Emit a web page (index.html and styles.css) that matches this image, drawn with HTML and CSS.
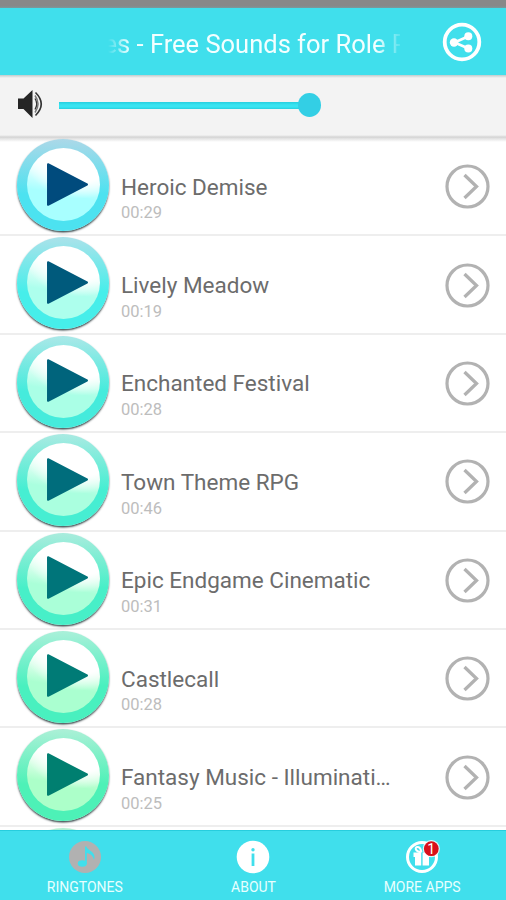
FILE: index.html
```
<!DOCTYPE html>
<html lang="en">
<head>
<meta charset="utf-8">
<title>Ringtones</title>
<link rel="stylesheet" href="styles.css">
</head>
<body>
<svg class="defs" aria-hidden="true">
  <symbol id="play" viewBox="0 0 40 42"><path d="M1 1.2 39 21 1 40.8Z" fill="currentColor" stroke="currentColor" stroke-width="2" stroke-linejoin="round"/></symbol>
  <symbol id="next" viewBox="0 0 46 46"><g fill="none" stroke="#b2b2b2"><circle cx="22.500" cy="22.500" r="20.500" stroke-width="3.200"/><path d="M19.500 11 31.500 22.500 19.500 34" stroke-width="3.300"/></g></symbol>
</svg>
<div class="app">
  <div class="status"></div>
  <header class="bar">
    <h1 class="marquee"><span>es - Free Sounds for Role P</span></h1>
    <svg class="share" viewBox="0 0 40 40"><circle cx="20" cy="20" r="17.300" fill="none" stroke="#fff" stroke-width="3.800"/><path d="M26.500 14.300 12.500 20.500 26.500 26.500" fill="none" stroke="#fff" stroke-width="2.600"/><g fill="#fff"><circle cx="26.300" cy="14.300" r="4"/><circle cx="12" cy="20.500" r="4.200"/><circle cx="26.300" cy="26.500" r="4"/></g></svg>
  </header>
  <div class="volume">
    <svg class="speaker" viewBox="0 0 28 30"><path d="M1 9.500H6.500L15.500 1V29L6.500 20H1Z" fill="#252525"/><g fill="none" stroke="#333"><path d="M18 9.500Q21.500 15 18 20.500" stroke-width="1.300"/><path d="M18 6.500Q24 15 18 23.500" stroke="#777" stroke-width="1.500"/><path d="M18.500 3.500Q30 15 18.500 26.500" stroke-width="1.600"/></g></svg>
    <div class="track"><i class="thumb"></i></div>
  </div>
  <main class="list">
    <div class="row c1"><div class="disc"><svg><use href="#play"/></svg></div><div class="info"><b>Heroic Demise</b><small>00:29</small></div><svg class="next"><use href="#next"/></svg></div>
    <div class="row c2"><div class="disc"><svg><use href="#play"/></svg></div><div class="info"><b>Lively Meadow</b><small>00:19</small></div><svg class="next"><use href="#next"/></svg></div>
    <div class="row c3"><div class="disc"><svg><use href="#play"/></svg></div><div class="info"><b>Enchanted Festival</b><small>00:28</small></div><svg class="next"><use href="#next"/></svg></div>
    <div class="row c4"><div class="disc"><svg><use href="#play"/></svg></div><div class="info"><b>Town Theme RPG</b><small>00:46</small></div><svg class="next"><use href="#next"/></svg></div>
    <div class="row c5"><div class="disc"><svg><use href="#play"/></svg></div><div class="info"><b>Epic Endgame Cinematic</b><small>00:31</small></div><svg class="next"><use href="#next"/></svg></div>
    <div class="row c6"><div class="disc"><svg><use href="#play"/></svg></div><div class="info"><b>Castlecall</b><small>00:28</small></div><svg class="next"><use href="#next"/></svg></div>
    <div class="row c7"><div class="disc"><svg><use href="#play"/></svg></div><div class="info"><b>Fantasy Music - Illuminati…</b><small>00:25</small></div><svg class="next"><use href="#next"/></svg></div>
    <div class="row c8"><div class="disc"></div></div>
  </main>
  <nav class="tabs">
    <div class="tab"><svg viewBox="0 0 34 34"><circle cx="17" cy="17" r="16" fill="#b1b1b1"/><ellipse cx="14.300" cy="23.500" rx="4.500" ry="3.300" fill="#40dfec"/><path d="M17 24V6.500H18.500C19 10.500 29 11.500 26 20 25 15.500 22 13.500 18.800 13V24Z" fill="#40dfec"/></svg><span>RINGTONES</span></div>
    <div class="tab"><svg viewBox="0 0 34 34"><circle cx="17" cy="17" r="16.300" fill="#fff"/><g fill="#40dfec"><circle cx="17" cy="9.700" r="1.700"/><path d="M15.600 13.500h2.800V26h-2.800z"/></g></svg><span>ABOUT</span></div>
    <div class="tab"><svg viewBox="0 0 34 34"><circle cx="17" cy="17" r="14.500" fill="none" stroke="#fff" stroke-width="3"/><path d="M8.500 12.500H16.200V25.500H10V17H8.500ZM17.600 12.500H25V17H24V25.500H17.600Z" fill="#fff"/><path d="M16.500 12C10 12 9.500 7 12.500 7S16 10 16.500 12" fill="none" stroke="#fff" stroke-width="2"/><circle cx="26.300" cy="8.700" r="8.600" fill="#fff" fill-opacity=".8"/><circle cx="26.300" cy="8.700" r="7.400" fill="#d9101b"/><text x="26.300" y="13.500" text-anchor="middle" class="count">1</text></svg><span>MORE APPS</span></div>
  </nav>
</div>
</body>
</html>
```
FILE: styles.css
```
* { box-sizing: border-box; }
body { margin: 0; font-family: Roboto, "Liberation Sans", sans-serif; }
.defs { position: absolute; width: 0; height: 0; }
.app { width: 506px; height: 900px; display: flex; flex-direction: column; overflow: hidden; background: #fff; }
.status { flex: none; height: 8px; background: linear-gradient(#888 6px, #7a9a9d); }
.bar { flex: none; height: 67px; padding: 0 24px 0 108px; background: #40dfec; display: flex; align-items: center; justify-content: space-between; }
.marquee { margin: 5px 0 0; width: 292px; height: 34px; font-weight: 400; font-size: 25.500px; line-height: 34px; color: #f3ffff; overflow: hidden; white-space: nowrap; -webkit-mask-image: linear-gradient(90deg, transparent, #000 22px, #000 268px, transparent 296px); mask-image: linear-gradient(90deg, transparent, #000 22px, #000 268px, transparent 296px); }
.marquee span { display: block; margin-left: -4.500px; letter-spacing: 0; }
.share { width: 40px; height: 40px; }
.volume { flex: none; height: 63px; padding: 0 0 4px 17px; display: flex; align-items: center; background: linear-gradient(#bfcbcc, #f3f3f3 3px, #f3f3f3 60px, #d5d5d5 62px, #dadada); }
.speaker { width: 28px; height: 30px; margin-top: -1px; }
.track { position: relative; width: 250px; height: 7px; margin-left: 14px; margin-top: 1px; background: linear-gradient(#25cfdf, #38e4f1 3px, #38e4f1 5px, #25cfdf); }
.thumb { position: absolute; right: -12px; top: -8.500px; width: 23.500px; height: 24px; border-radius: 50%; background: #33cfe5; }
.list { flex: 1; min-height: 0; overflow: hidden; background: linear-gradient(#dedede, #fff 4px); }
.row { height: 98.400px; padding: 0 15px 0 17px; display: flex; border-bottom: 2px solid #eee; }
.disc { flex: none; width: 92px; height: 92px; margin-top: 1px; border-radius: 50%; display: grid; place-items: center; background: linear-gradient(var(--top), var(--mid) 60%, var(--mid)); box-shadow: 0 1.500px 2px #3e4c4f; position: relative; }
.disc::before { content: ""; grid-area: 1 / 1; width: 73px; height: 73px; border-radius: 50%; margin-top: -1px; background: radial-gradient(ellipse 55px 42px at 72% 12%, #fff 60%, transparent), linear-gradient(190deg, #fff 26%, var(--pale) 62%, var(--pale)); }
.disc svg { grid-area: 1 / 1; width: 41px; height: 43px; color: var(--ink); z-index: 1; margin-left: 9px; margin-top: -2px; }
.c1 { --top: #acd8e8; --mid: #4ce2f0; --pale: #a8ffff; --ink: #004b7d; }
.c2 { --top: #abe2ea; --mid: #46eeea; --pale: #adffed; --ink: #005a7c; }
.c3 { --top: #abe8e8; --mid: #45ebdc; --pale: #aaffe6; --ink: #00647c; }
.c4 { --top: #aaeae2; --mid: #46eed2; --pale: #aaffdf; --ink: #006d7c; }
.c5 { --top: #aaecdd; --mid: #47efc8; --pale: #aaffd8; --ink: #00757a; }
.c6 { --top: #aaf0d9; --mid: #49f0bf; --pale: #aaffd0; --ink: #007b76; }
.c7 { --top: #acf0d7; --mid: #4df1b7; --pale: #acffc9; --ink: #007f70; }
.c8 { --top: #b3efd2; --mid: #55efae; --pale: #acffc9; }
.info { flex: 1; min-width: 0; padding: 34.600px 0 0 12px; display: flex; flex-direction: column; white-space: nowrap; }
.info b { font-weight: 400; font-size: 22.500px; line-height: 28px; color: #6c6c6c; letter-spacing: 0; }
.info small { font-size: 16.500px; line-height: 22px; margin-top: 1.900px; color: #bdbdbd; }
.next { flex: none; width: 46px; height: 46px; margin-top: 26.300px; }
.tabs { flex: none; height: 70px; background: #40dfec; border-top: 1px solid #27cddd; display: grid; grid-template-columns: repeat(3, 1fr); }
.tab { display: flex; flex-direction: column; align-items: center; padding: 8.500px 0 0 1px; color: #e8ffff; font-size: 14px; line-height: 18px; }
.tab svg { width: 34px; height: 34px; overflow: visible; }
.tab span { margin-top: 4px; }
.count { font: 14px Roboto, sans-serif; fill: #fff; }
```
